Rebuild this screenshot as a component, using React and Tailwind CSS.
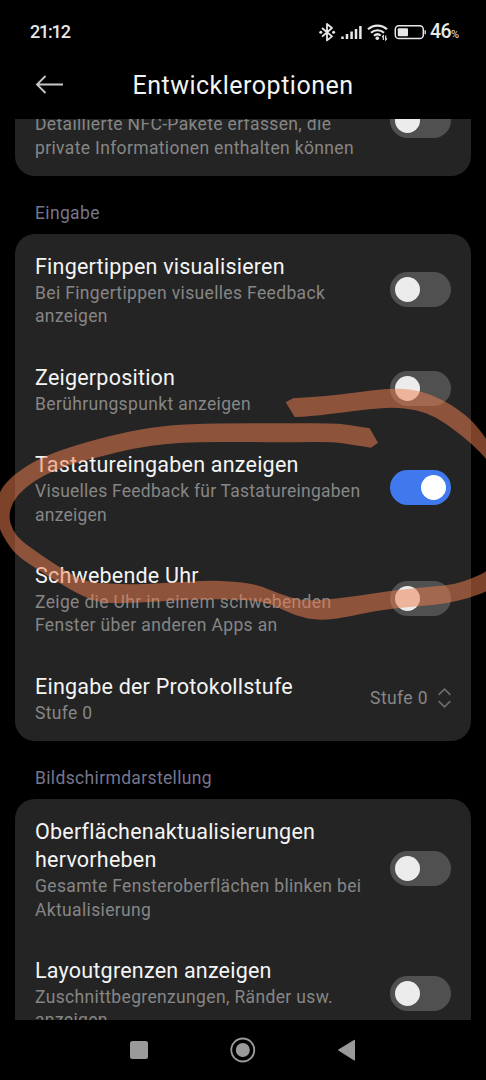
import React from 'react';

const inputSettings = [
  { title: ['Fingertippen visualisieren'], summary: ['Bei Fingertippen visuelles Feedback', 'anzeigen'] },
  { title: ['Zeigerposition'], summary: ['Berührungspunkt anzeigen'] },
  { title: ['Tastatureingaben anzeigen'], summary: ['Visuelles Feedback für Tastatureingaben', 'anzeigen'], on: true, tight: true },
  { title: ['Schwebende Uhr'], summary: ['Zeige die Uhr in einem schwebenden', 'Fenster über anderen Apps an'] },
  { title: ['Eingabe der Protokollstufe'], summary: ['Stufe 0'], value: 'Stufe 0' },
];

const displaySettings = [
  { title: ['Oberflächenaktualisierungen', 'hervorheben'], summary: ['Gesamte Fensteroberflächen blinken bei', 'Aktualisierung'] },
  { title: ['Layoutgrenzen anzeigen'], summary: ['Zuschnittbegrenzungen, Ränder usw.', 'anzeigen'] },
];

// Scrolled under the header, so its title line is empty
const nfcSettings = [
  { title: [''], summary: ['Detaillierte NFC-Pakete erfassen, die', 'private Informationen enthalten können'] },
];

// Both sides of the marker stroke, from the upper right end round to the upper left end
const outerEdge = [
  [293, 398.3], [326, 396.5], [366, 391], [390, 388.5], [410, 388.8], [430, 394], [450, 404], [462, 412.5], [474, 422.5],
  [486, 438.5], [494, 450], [502, 475], [506, 530], [500, 580], [490, 590], [469.7, 598], [443, 604], [409.7, 607],
  [376, 610.7], [343, 618], [318, 620.5], [296, 616], [273, 605], [256, 600.5], [233, 599.3], [200, 599],
  [166.7, 601], [133, 603.2], [103, 603.2], [83, 596.7], [60, 583.5], [36.7, 569], [16.7, 555.5], [6.7, 542.7],
  [-1, 528], [-4, 511], [-1, 493], [6, 482.5], [17, 472.5], [37, 459.5], [66.7, 447.8], [110, 435.5],
  [150, 427.4], [190, 423.6], [243, 423.2], [290, 423.2], [336, 423.3], [349.7, 425], [369.7, 428.3],
];
const innerEdge = [
  [371, 447.7], [353, 445], [333, 441.7], [290, 442.3], [243, 442], [200, 442], [166.7, 443.5], [133, 448.3],
  [100, 456.7], [66.7, 465.5], [40, 477.2], [22, 490.5], [12, 503], [8.8, 516.7], [12, 529], [20, 540],
  [43.3, 556.7], [66.7, 572], [86.7, 582.3], [123, 584.4], [150, 584], [186.7, 581.6], [216.7, 580.5],
  [243, 582.4], [259.7, 585.7], [278, 593.3], [299.7, 600.3], [319.7, 600.3], [353, 596.7], [390, 590.7],
  [430, 586.7], [453, 585], [473, 578], [488, 571], [496, 560], [498, 490], [494, 470], [486, 458.5], [473, 445],
  [456, 431], [436, 417], [416, 409.5], [393, 407.3], [369.7, 409], [343, 412.3], [312, 416.3], [294.7, 417],
];

// Quadratic segments through the midpoints of the given points
function smooth(points) {
  const last = points[points.length - 1];
  const curves = points.slice(1, -1).map(([x, y], i) => {
    const next = points[i + 2];
    return `Q${x},${y} ${(x + next[0]) / 2},${(y + next[1]) / 2}`;
  });
  return `${curves.join('')}L${last[0]},${last[1]}`;
}

function Marker() {
  const d = `M285.7,402.3L293,398.3${smooth(outerEdge)}L378,442.7L371,447.7${smooth(innerEdge)}Z`;
  return (
    <svg className="pointer-events-none absolute inset-0" width="486" height="1080" viewBox="0 0 486 1080">
      <path d={d} fill="#f07f50" fillOpacity="0.52" stroke="none" />
    </svg>
  );
}

function Toggle({ on }) {
  return (
    <div className={`flex h-[35px] w-[61px] shrink-0 items-center rounded-full px-[5px] ${on ? 'justify-end bg-[#4078ee]' : 'bg-[#505050]'}`}>
      <div className={`size-[25px] rounded-full ${on ? 'bg-white' : 'bg-[#ececec]'}`} />
    </div>
  );
}

function Row({ title, summary, on, value, tight }) {
  return (
    <div className="flex items-center justify-between py-[18px] pr-5 pl-5">
      <div className="translate-y-px whitespace-nowrap">
        {title.map((line) => (
          <div key={line} className="min-h-[28px] text-[21.5px] leading-[28px] tracking-[0.22px] text-[#f4f4f4]">{line}</div>
        ))}
        <div className="translate-y-px">
          {summary.map((line) => (
            <div key={line} className={`text-[17.5px] leading-[23.4px] text-[#868686] ${tight ? 'tracking-[0.25px]' : 'tracking-[0.35px]'}`}>{line}</div>
          ))}
        </div>
      </div>
      {value ? (
        <div className="flex items-center gap-2.5 text-[17.5px] tracking-[0.4px] text-[#868686]">
          <span className="pt-0.5">{value}</span>
          <svg width="13" height="20" viewBox="0 0 13 20" fill="none" stroke="#6c6c6c" strokeWidth="1.7">
            <path d="M0.6 6.8L6.5 1.2l5.9 5.6M0.6 13.2l5.9 5.6 5.9-5.6" />
          </svg>
        </div>
      ) : (
        <Toggle on={on} />
      )}
    </div>
  );
}

function Card({ items }) {
  return (
    <div className="mx-[15px] rounded-[20px] bg-[#242424]">
      {items.map((item) => (
        <Row key={item.title[0]} {...item} />
      ))}
    </div>
  );
}

function SectionLabel({ children }) {
  return (
    <h2 className="flex h-[58px] items-center pt-4 pl-[35px] text-[17.5px] tracking-[0.35px] text-[#77768c]">{children}</h2>
  );
}

function StatusBar() {
  return (
    <div className="flex h-[50px] items-center justify-between pt-[13px] pr-[27px] pl-[30px] text-[#e8e8e8]">
      <span className="text-[18px] font-medium tracking-[-1.2px]">21:12</span>
      <div className="flex items-center">
        <svg width="107" height="20" viewBox="319 21 107 20" fill="none" stroke="#e8e8e8">
          <path d="M322 27l10 8.4-5 4V23l5 4-10 8.6" strokeWidth="1.8" strokeLinejoin="round" />
          <circle cx="320.8" cy="31.2" r="1.5" fill="#e8e8e8" stroke="none" />
          <circle cx="333.6" cy="31.2" r="1.5" fill="#e8e8e8" stroke="none" />
          <path d="M342.5 35.5V38M347 33V38M351.6 30.5V38M356 28V38M360.4 25V38" strokeWidth="2.5" />
          <path d="M368 28.3c5.5-4.9 13.5-4.9 19 0M371 31.8c3.8-3.4 9.2-3.4 13 0M374 34.8c2-1.8 4.6-1.9 6.7-.3" strokeWidth="2.2" />
          <circle cx="377.3" cy="37.2" r="1.8" fill="#e8e8e8" stroke="none" />
          <path d="M383.3 39v-4.2l-1.2 1.3M385.7 34.6v4.2l1.2-1.3" strokeWidth="1.2" />
          <rect x="395.3" y="24.8" width="28" height="12.8" rx="3.6" strokeWidth="1.5" />
          <rect x="397.8" y="27.2" width="10.2" height="8" rx="1" fill="#e8e8e8" stroke="none" />
          <path d="M425.2 29.2v4" strokeWidth="1.3" />
        </svg>
        <span className="ml-1 text-[19.5px] leading-none font-medium tracking-[-0.6px]">46</span>
        <span className="pt-1.5 text-[11px] leading-none">%</span>
      </div>
    </div>
  );
}

function NavBar() {
  return (
    <div className="flex h-[60px] items-center">
      <svg width="486" height="60" viewBox="0 0 486 60" fill="#9a9a9a">
        <rect x="130" y="21" width="18" height="18" rx="2.5" />
        <circle cx="242.8" cy="30" r="11.5" fill="none" stroke="#9a9a9a" strokeWidth="1.8" />
        <circle cx="242.8" cy="30" r="7" />
        <path d="M338.4 30L354.5 20.2v20z" stroke="#9a9a9a" strokeLinejoin="round" />
      </svg>
    </div>
  );
}

export default function App() {
  return (
    <div className="relative flex h-[1080px] w-[486px] flex-col overflow-hidden bg-black font-['Roboto','Noto_Sans',sans-serif]">
      <StatusBar />
      <header className="grid h-[69px] grid-cols-[36px_1fr_36px] items-center">
        <svg className="ml-[35px]" width="30" height="22" viewBox="0 0 30 22" fill="none" stroke="#c8c8c8" strokeWidth="1.8">
          <path d="M28 10.5H2M10.5 2L2 10.5l8.5 8.5" />
        </svg>
        <h1 className="pt-0.5 text-center text-[25px] tracking-[0.5px] text-[#f4f4f4]">Entwickleroptionen</h1>
      </header>
      <main className="h-[901px] shrink-0 overflow-hidden">
        <div className="-mt-[53.8px]">
          <Card items={nfcSettings} />
          <SectionLabel>Eingabe</SectionLabel>
          <Card items={inputSettings} />
          <SectionLabel>Bildschirmdarstellung</SectionLabel>
          <Card items={displaySettings} />
        </div>
      </main>
      <NavBar />
      <Marker />
    </div>
  );
}
